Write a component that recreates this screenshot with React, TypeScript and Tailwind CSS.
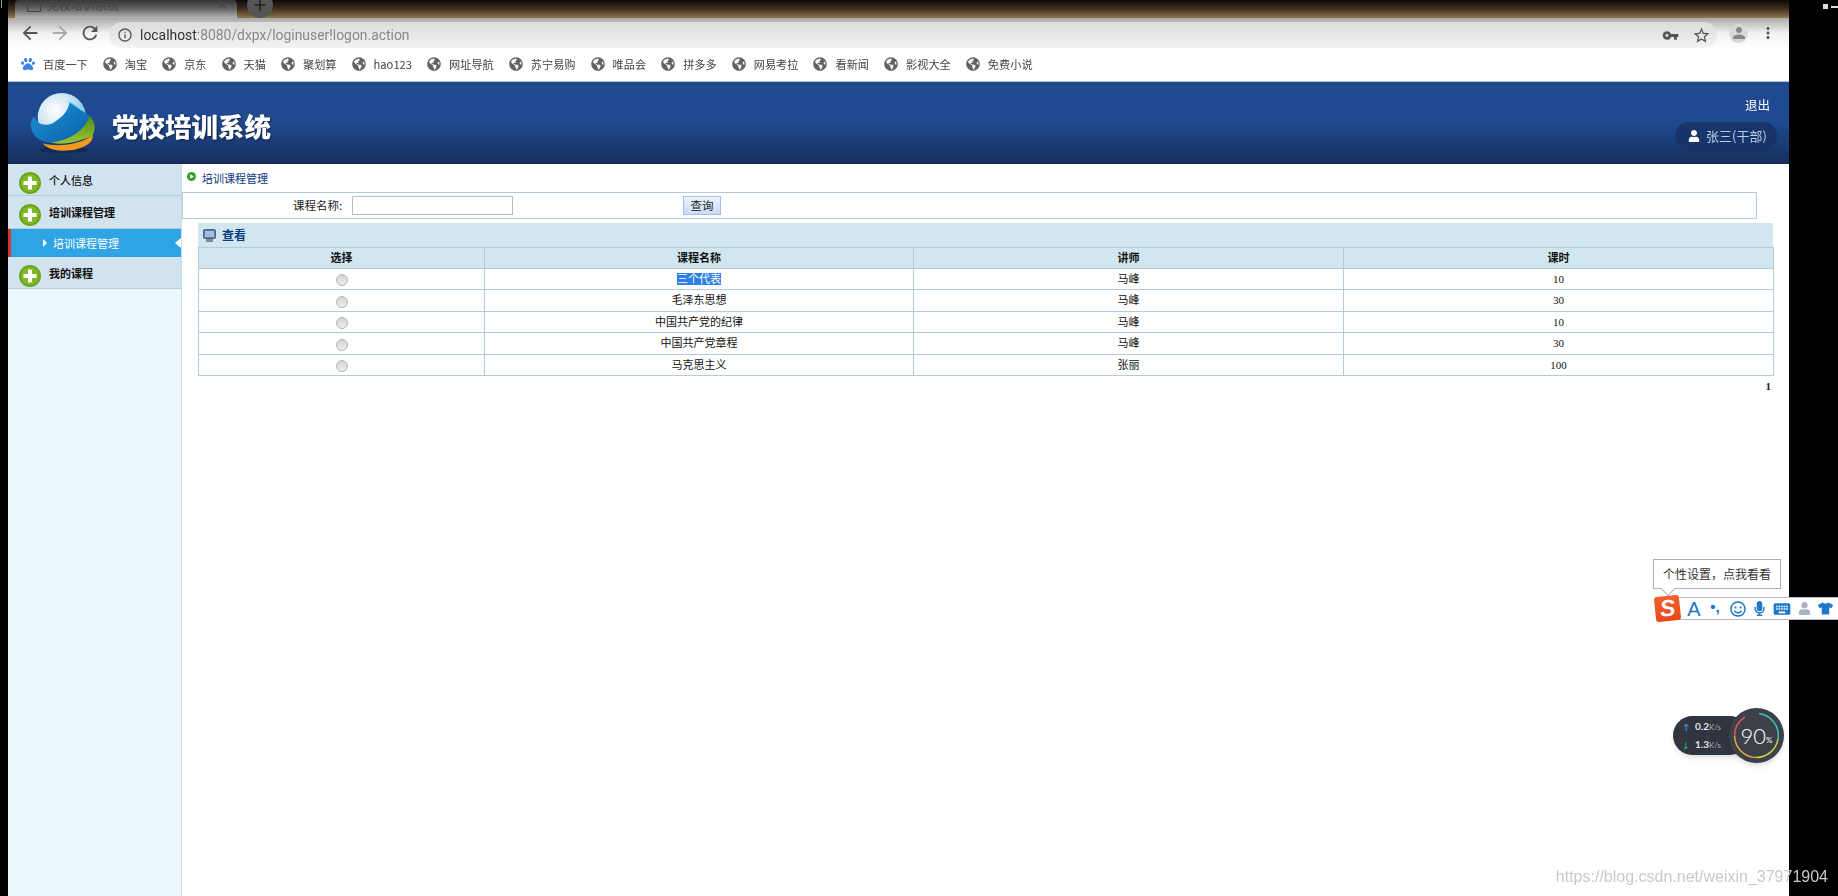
import React from "react";
import { MdArrowBack, MdArrowForward, MdRefresh, MdInfoOutline, MdVpnKey, MdStarBorder, MdMoreVert, MdPerson, MdKeyboard, MdClose, MdAdd } from "react-icons/md";
import { FaGlobeAmericas, FaPaw, FaUser, FaRegSmile, FaMicrophone, FaTshirt } from "react-icons/fa";

const bookmarks = ["淘宝", "京东", "天猫", "聚划算", "hao123", "网址导航", "苏宁易购", "唯品会", "拼多多", "网易考拉", "看新闻", "影视大全", "免费小说"];
const rows = [
  ["三个代表", "马峰", "10"],
  ["毛泽东思想", "马峰", "30"],
  ["中国共产党的纪律", "马峰", "10"],
  ["中国共产党章程", "马峰", "30"],
  ["马克思主义", "张丽", "100"],
];

function PlusIcon() {
  return (
    <svg width="22" height="22" viewBox="0 0 22 22" className="shrink-0">
      <circle cx="11" cy="11" r="11" fill="#6fa51e" />
      <circle cx="11" cy="11" r="9" fill="#7fb927" />
      <path d="M9 4.5h4V9h4.5v4H13v4.5H9V13H4.5V9H9z" fill="#fff" />
    </svg>
  );
}

function Logo() {
  return (
    <svg width="67" height="62" viewBox="90 35 200 185" className="shrink-0">
      <defs>
        <radialGradient id="g1" cx="0.35" cy="0.35" r="0.8">
          <stop offset="0" stopColor="#ffffff" />
          <stop offset="0.55" stopColor="#c4e0f0" />
          <stop offset="1" stopColor="#4e9dd2" />
        </radialGradient>
        <linearGradient id="g2" x1="0" y1="0" x2="1" y2="1">
          <stop offset="0" stopColor="#1f95d8" />
          <stop offset="1" stopColor="#0a5ea8" />
        </linearGradient>
        <linearGradient id="g3" x1="0" y1="0" x2="0" y2="1">
          <stop offset="0" stopColor="#4d8f1d" />
          <stop offset="1" stopColor="#9cc52e" />
        </linearGradient>
      </defs>
      <ellipse cx="190" cy="208" rx="75" ry="9" fill="#10264f" opacity="0.7" />
      <circle cx="185" cy="110" r="72" fill="url(#g1)" />
      <path d="M205 60 L255 88 L240 92 L208 72 Z" fill="#7fdcf5" />
      <path d="M208 66 L268 106 C258 150 205 186 155 186 C120 186 92 165 92 130 C94 120 98 112 104 108 C110 136 146 140 170 120 C192 104 204 88 208 66 Z" fill="url(#g2)" />
      <path d="M268 106 C288 128 285 150 276 166 C240 180 195 196 150 186 C205 182 255 150 268 106 Z" fill="url(#g3)" />
      <path d="M277 165 C280 190 240 210 190 210 C160 210 140 202 128 188 C180 202 240 190 277 165 Z" fill="#f29a1f" />
    </svg>
  );
}

function ChromeBars() {
  return (
    <div className="blur-[0.4px]">
      <div className="h-[18px] flex bg-gradient-to-b from-[#0d0a06] via-[#3d3120] to-[#93794c] overflow-hidden">
        <div className="w-[7px]" />
        <div className="w-[222px] bg-gradient-to-b from-[#333333] via-[#666666] to-[#b5b5b5] rounded-t flex items-start pl-3 text-[#444]">
          <div className="h-[10px] flex items-center gap-[6px] w-full">
            <div className="w-[14px] h-[14px] border border-[#444] shrink-0" />
            <span className="text-[12px] font-['Noto_Sans_CJK_SC',sans-serif] flex-1">党校培训系统</span>
            <MdClose size={14} className="mr-2" />
          </div>
        </div>
        <div className="w-[10px]" />
        <div className="w-[26px] h-[26px] rounded-full bg-[#555] flex items-start justify-center text-[#222] -mt-[8px] pt-[3px]">
          <MdAdd size={20} />
        </div>
      </div>
      <div className="h-[30px] bg-gradient-to-b from-[#a9a9a9] via-[#f1f1f1] to-white flex items-center pl-[11px] pr-[12px] text-[#555]">
        <MdArrowBack size={22} className="shrink-0 text-[#555]" />
        <MdArrowForward size={22} className="shrink-0 ml-2 text-[#aaa]" />
        <MdRefresh size={22} className="shrink-0 ml-2 text-[#555]" />
        <div className="ml-[8px] h-[26px] mt-[4px] w-[1608px] rounded-l-full rounded-r-full bg-gradient-to-b from-[#dcdcdc] to-[#f1f3f4] flex items-center pl-[8px] pr-[6px]">
          <MdInfoOutline size={16} className="shrink-0" />
          <span className="ml-[7px] text-[13.9px] font-['Roboto',sans-serif] text-[#888]"><span className="text-[#333]">localhost</span>:8080/dxpx/loginuser!logon.action</span>
          <div className="flex-1" />
          <MdVpnKey size={17} className="shrink-0" />
          <MdStarBorder size={19} className="shrink-0 ml-[13px]" />
        </div>
        <div className="w-[19px] h-[19px] rounded-full bg-[#d8d8d8] ml-[12px] flex items-center justify-center shrink-0 text-[#888]">
          <MdPerson size={18} />
        </div>
        <MdMoreVert size={18} className="shrink-0 ml-[11px]" />
      </div>
      <div className="h-[34px] bg-white border-b border-[#b8c0cc] flex items-center gap-[15px] pl-[13px] text-[11.2px] text-[#444] font-['Noto_Sans_CJK_SC',sans-serif]">
        <div className="flex items-center gap-[8px]">
          <FaPaw size={14} className="text-[#3c82e0]" />
          <span>百度一下</span>
        </div>
        {bookmarks.map((b) => (
          <div key={b} className="flex items-center gap-[8px]">
            <FaGlobeAmericas size={14} className="text-[#5f6368]" />
            <span>{b}</span>
          </div>
        ))}
      </div>
    </div>
  );
}

function Header() {
  return (
    <div className="h-[82px] bg-gradient-to-b from-[#204a90] via-[#204a90] to-[#162f5e] border-b border-[#12264f] flex pl-[22px] pr-[12px] blur-[0.3px]">
      <div className="flex items-center gap-[15px]">
        <Logo />
        <span className="mt-[6px] text-[26.5px] font-black text-white font-['Noto_Sans_CJK_SC',sans-serif] [text-shadow:1px_1px_2px_rgba(0,0,0,0.5)]">党校培训系统</span>
      </div>
      <div className="flex-1" />
      <div className="flex flex-col items-end pt-[15px]">
        <span className="text-[12.5px] leading-[16px] text-white mr-[7px] font-['Noto_Sans_CJK_SC',sans-serif]">退出</span>
        <div className="mt-[9px] h-[28px] w-[102px] rounded-full bg-[#19346a] flex items-center pl-[13px] gap-[6px] text-[13px] text-[#b8cde8] font-['Noto_Sans_CJK_SC',sans-serif]">
          <FaUser size={12} className="text-white shrink-0" />
          <span>张三(干部)</span>
        </div>
      </div>
    </div>
  );
}

function MenuHead({ label, h, bold }: { label: string; h: string; bold?: boolean }) {
  return (
    <div className={`${h} bg-[#d0e3ef] border-b border-[#b5cbd8] flex items-start pl-[11px] pt-[8px] gap-[8px]`}>
      <PlusIcon />
      <span className={`text-[11px] leading-[16px] text-[#111] ${bold ? "font-bold" : "font-medium"}`}>{label}</span>
    </div>
  );
}

function Sidebar() {
  return (
    <div className="w-[174px] bg-[#ecf7fe] border-r border-[#c7dfe9] font-['Noto_Sans_CJK_SC',sans-serif] shrink-0">
      <MenuHead label="个人信息" h="h-[32px]" />
      <MenuHead label="培训课程管理" h="h-[33px]" bold />
      <div className="relative h-[28px] bg-[#2fa4e4] border-l-[3px] border-[#d8342c] flex items-center pl-[32px] text-white text-[11px]">
        <span className="w-0 h-0 border-y-[4px] border-y-transparent border-l-[4px] border-l-white mr-[6px]" />
        <span>培训课程管理</span>
        <span className="absolute right-0 top-[9px] w-0 h-0 border-y-[5px] border-y-transparent border-r-[6px] border-r-white" />
      </div>
      <MenuHead label="我的课程" h="h-[32px]" bold />
    </div>
  );
}

function MainContent() {
  return (
    <div className="flex-1 bg-white flex flex-col font-['Liberation_Serif','Noto_Sans_CJK_SC',serif] text-[11px] text-[#111]">
      <div className="h-[28px] flex items-center pl-[5px] gap-[6px] text-[#0b3a80] font-['Noto_Sans_CJK_SC',sans-serif]">
        <svg width="9" height="9" viewBox="0 0 9 9" className="shrink-0 -mt-1">
          <circle cx="4.5" cy="4.5" r="4.5" fill="#2fa02c" />
          <path d="M3.2 2.2 7 4.5 3.2 6.8z" fill="#fff" />
        </svg>
        <span>培训课程管理</span>
      </div>
      <div className="w-[1575px] h-[27px] border border-[#b6cad5] flex items-center">
        <span className="ml-[110px] w-[51px] text-[11.5px] font-['Noto_Sans_CJK_SC',sans-serif] text-[#222] whitespace-nowrap">课程名称:</span>
        <input className="ml-[8px] w-[161px] h-[19px] border border-[#bbbbbb] bg-white" readOnly />
        <button className="ml-[170px] w-[38px] h-[19px] border border-[#9ebff0] bg-gradient-to-b from-[#eef3fb] to-[#c9dbf5] text-[11.5px] text-[#222] font-['Noto_Sans_CJK_SC',sans-serif]">查询</button>
      </div>
      <div className="mt-[4px] ml-[16px] w-[1575px]">
        <div className="h-[24px] bg-[#d0e7f0] flex items-center pl-[5px] gap-[6px] text-[#0b3a80] text-[12px] font-bold font-['Noto_Sans_CJK_SC',sans-serif]">
          <svg width="13" height="13" viewBox="0 0 13 13" className="shrink-0">
            <rect x="0.5" y="0.5" width="12" height="9" rx="1" fill="#5a7ea8" stroke="#56657a" />
            <rect x="2" y="2" width="9" height="6" fill="#9fc0e0" />
            <rect x="3" y="10" width="7" height="3" fill="#7d8a9a" />
          </svg>
          <span>查看</span>
        </div>
        <table className="w-full table-fixed border-collapse text-center">
          <colgroup>
            <col className="w-[286px]" />
            <col className="w-[429px]" />
            <col className="w-[430px]" />
            <col className="w-[430px]" />
          </colgroup>
          <thead>
            <tr className="h-[21px] bg-[#d0e7f0] font-bold">
              {["选择", "课程名称", "讲师", "课时"].map((h) => (
                <th key={h} className="border border-[#b5cbd8] p-0 font-bold text-[11px]">{h}</th>
              ))}
            </tr>
          </thead>
          <tbody>
            {rows.map((r, i) => (
              <tr key={r[0]} className="h-[21.4px]">
                <td className="border border-[#b5cbd8] p-0">
                  <span className="inline-block align-middle w-[12px] h-[12px] rounded-full border border-[#b5b5b5] bg-gradient-to-b from-[#d4d4d4] to-[#ededed]" />
                </td>
                <td className="border border-[#b5cbd8] p-0">
                  <span className={i === 0 ? "bg-[#2f7fe8] text-white" : ""}>{r[0]}</span>
                </td>
                <td className="border border-[#b5cbd8] p-0">{r[1]}</td>
                <td className="border border-[#b5cbd8] p-0">{r[2]}</td>
              </tr>
            ))}
          </tbody>
        </table>
        <div className="text-right pr-[2px] pt-[2px] font-bold text-[11px] text-[#222]">1</div>
      </div>
    </div>
  );
}

function SogouBar() {
  return (
    <>
      <div className="absolute left-[1653px] top-[559px] w-[128px] h-[30px] bg-white border border-[#aab0bb] flex items-center justify-center text-[12px] text-[#333] font-['Noto_Sans_CJK_SC',sans-serif] whitespace-nowrap">
        个性设置，点我看看
        <span className="absolute left-[9px] -bottom-[6px] w-[10px] h-[10px] bg-white border-r border-b border-[#aab0bb] rotate-45" />
      </div>
      <div className="absolute left-[1664px] top-[597px] w-[174px] h-[23px] bg-white border-y border-[#b5bccd] flex items-center text-[#1d78c9]">
        <span className="w-[20px]" />
        <span className="w-[20px] text-center text-[20px] leading-[20px] font-['Liberation_Sans',sans-serif]">A</span>
        <span className="w-[22px] text-center text-[15px] leading-[15px] font-bold font-['Liberation_Sans',sans-serif] -mt-1">•,</span>
        <span className="w-[23px] flex justify-center"><FaRegSmile size={16} /></span>
        <span className="w-[21px] flex justify-center"><FaMicrophone size={15} /></span>
        <span className="w-[23px] flex justify-center"><MdKeyboard size={20} /></span>
        <span className="w-[22px] flex justify-center text-[#a9b3bf]"><FaUser size={13} /></span>
        <span className="w-[20px] flex justify-center"><FaTshirt size={15} /></span>
      </div>
      <div className="absolute left-[1655px] top-[596px] w-[25px] h-[25px] rounded-[3px] -rotate-6 bg-gradient-to-b from-[#f4602b] to-[#e9471a] flex items-center justify-center text-white font-black italic text-[23px] leading-[23px] font-['Liberation_Sans',sans-serif]">S</div>
    </>
  );
}

function SpeedWidget() {
  return (
    <>
      <div className="absolute left-[1673px] top-[716px] w-[76px] h-[39px] rounded-full bg-[#30353f] shadow-md font-['Lato',sans-serif] text-[10px] font-bold text-[#e4e6ea] flex flex-col justify-center pl-[10px] gap-[3px]">
        <div className="flex items-center gap-[6px] leading-[14px]">
          <span className="text-[#3ea2e8] text-[8px]">↑</span>
          <span>0.2<span className="font-normal text-[8px] text-[#aab0ba]">K/s</span></span>
        </div>
        <div className="flex items-center gap-[6px] leading-[14px]">
          <span className="text-[#2eaa5c] text-[8px]">↓</span>
          <span>1.3<span className="font-normal text-[8px] text-[#aab0ba]">K/s</span></span>
        </div>
      </div>
      <div className="absolute left-[1729px] top-[708px] w-[55px] h-[55px] rounded-full bg-[#3b4049] shadow-md flex items-center justify-center text-white font-['Lato',sans-serif]">
        <svg width="47" height="47" viewBox="0 0 47 47" className="absolute left-[4px] top-[4px]" fill="none" strokeWidth="1.5">
          <path d="M26 1.6A22 22 0 0 1 45 27" stroke="#3fbfae" />
          <path d="M45 27A22 22 0 0 1 23.5 45.5" stroke="#d8d24a" />
          <path d="M23.5 45.5A22 22 0 0 1 1.6 24" stroke="#f0a43a" />
          <path d="M1.6 24A22 22 0 0 1 12 5" stroke="#d9555a" />
        </svg>
        <span className="text-[22px] leading-[24px] font-light">90</span>
        <span className="text-[8px] mt-[8px]">%</span>
      </div>
    </>
  );
}

export default function App() {
  return (
    <div className="relative w-[1838px] h-[896px] overflow-hidden bg-black flex">
      <div className="w-[8px] shrink-0 flex flex-col gap-[1px] pt-0">
        <div className="w-[1px] h-[8px] bg-[#999] ml-[1px]" />
      </div>
      <div className="w-[1781px] shrink-0 flex flex-col bg-white">
        <ChromeBars />
        <Header />
        <div className="flex-1 flex min-h-0">
          <Sidebar />
          <MainContent />
        </div>
      </div>
      <div className="flex-1 flex justify-end items-start gap-[3px] pr-0">
        <div className="w-[5px] h-[5px] bg-[#ddd] mt-[4px]" />
        <div className="w-[7px] h-[2px] bg-[#ddd] mt-[6px]" />
      </div>
      <SogouBar />
      <SpeedWidget />
      <div className="absolute right-[10px] top-[866px] text-[16px] leading-[22px] text-[#c9c9c9] font-['Liberation_Sans',sans-serif] blur-[0.3px]">https://blog.csdn.net/weixin_37971904</div>
    </div>
  );
}
